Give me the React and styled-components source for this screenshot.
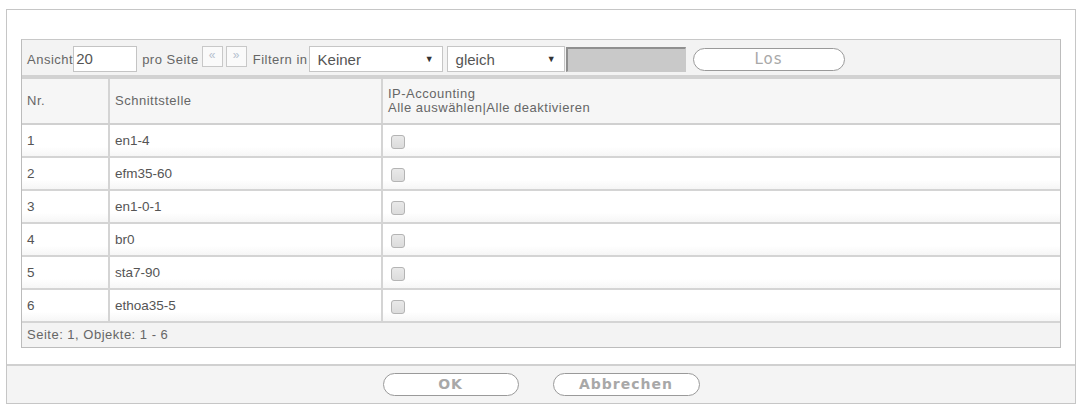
import styled, { createGlobalStyle } from "styled-components";

const GlobalStyle = createGlobalStyle`
  html, body {
    margin: 0;
    padding: 0;
    background: #ffffff;
    font-family: "Liberation Sans", Arial, sans-serif;
    color: #555555;
  }
`;

const Page = styled.div`
  padding: 9px 2px 0 6px;
`;

const Frame = styled.div`
  border: 1px solid #c6c6c6;
  height: 395px;
  box-sizing: border-box;
  display: flex;
  flex-direction: column;
`;

const Content = styled.div`
  flex: 1;
  padding: 29px 14px 0 14px;
`;

const Grid = styled.div`
  border: 1px solid #bcbcbc;
  border-top-color: #c8c8c8;
`;

const Toolbar = styled.div`
  display: flex;
  align-items: center;
  box-sizing: border-box;
  height: 39px;
  padding: 3px 5px 0 5px;
  background: #f3f3f3;
  border-bottom: 4px solid #d2d2d2;
  font-size: 13px;
  color: #666666;
`;

const Label = styled.span`
  margin-right: ${(p) => p.$mr || 0}px;
  margin-left: ${(p) => p.$ml || 0}px;
  letter-spacing: 0.5px;
`;

const TextBox = styled.div`
  box-sizing: border-box;
  width: ${(p) => p.$w}px;
  height: 26px;
  border: 1px solid #c4c4c4;
  background: #ffffff;
  font-size: 15px;
  color: #555555;
  padding: 3px 0 0 2px;
`;

const PageButton = styled.div`
  box-sizing: border-box;
  width: 21px;
  height: 21px;
  margin: -5px 3px 0 0;
  border: 1px solid #c8c8c8;
  background: #fafafa;
  color: #b5c0ce;
  font-size: 12px;
  text-align: center;
  line-height: 16px;
`;

const Select = styled.div`
  box-sizing: border-box;
  display: flex;
  align-items: center;
  justify-content: space-between;
  width: ${(p) => p.$w}px;
  height: 26px;
  margin-right: ${(p) => p.$mr || 0}px;
  padding: 0 8px 0 8px;
  border: 1px solid #c6c6c6;
  background: #ffffff;
  font-size: 15px;
  color: #555555;
`;

const Arrow = styled.span`
  font-size: 9px;
  color: #333333;
`;

const GrayInput = styled.div`
  box-sizing: border-box;
  width: 120px;
  height: 25px;
  border: 1px solid #c9c9c9;
  border-top: 2px solid #8f8f8f;
  border-left: 2px solid #8f8f8f;
  background: #c9c9c9;
  margin-right: 7px;
`;

const PillButton = styled.div`
  box-sizing: border-box;
  width: ${(p) => p.$w}px;
  height: 23px;
  border: 1.5px solid #9a9a9a;
  border-radius: 12px;
  background: #ffffff;
  color: #a8a8a8;
  font-family: "DejaVu Sans", sans-serif;
  font-size: ${(p) => (p.$bold ? 14 : 15)}px;
  font-weight: ${(p) => (p.$bold ? 700 : 400)};
  letter-spacing: 1px;
  text-align: center;
  line-height: 20px;
`;

const Table = styled.table`
  width: 100%;
  border-collapse: collapse;
  table-layout: fixed;
`;

const HeadCell = styled.th`
  height: 44px;
  padding: 0 0 0 5px;
  background: #f6f6f6;
  border-bottom: 2px solid #d0d0d0;
  border-left: ${(p) => (p.$first ? "none" : "2px solid #d4d4d4")};
  font-size: 13px;
  font-weight: 400;
  letter-spacing: 0.5px;
  color: #666666;
  text-align: left;
  vertical-align: middle;
  line-height: 14px;
`;

const Cell = styled.td`
  height: 31px;
  padding: 0 0 0 5px;
  background: linear-gradient(#ffffff 70%, #f6f6f6);
  border-bottom: 2px solid #d4d4d4;
  border-left: ${(p) => (p.$first ? "none" : "2px solid #d4d4d4")};
  font-size: 13.5px;
  color: #555555;
  vertical-align: middle;
`;

const Check = styled.input.attrs({ type: "checkbox" })`
  appearance: none;
  display: block;
  width: 14px;
  height: 14px;
  margin: 2px 0 0 3px;
  border: 1px solid #b4b4b4;
  border-radius: 3px;
  background: linear-gradient(#e9e9e9, #dcdcdc);
`;

const StatusRow = styled.div`
  height: 24px;
  padding-left: 5px;
  background: #f3f3f3;
  font-size: 13px;
  line-height: 24px;
  color: #666666;
  letter-spacing: 0.5px;
`;

const Footer = styled.div`
  height: 37px;
  border-top: 2px solid #d0d0d0;
  background: #f4f4f4;
  display: flex;
  justify-content: center;
  align-items: center;
  gap: 34px;
`;

const rows = [
  [1, "en1-4"],
  [2, "efm35-60"],
  [3, "en1-0-1"],
  [4, "br0"],
  [5, "sta7-90"],
  [6, "ethoa35-5"],
];

export default function App() {
  return (
    <Page>
      <GlobalStyle />
      <Frame>
        <Content>
          <Grid>
            <Toolbar>
              <Label>Ansicht</Label>
              <TextBox $w={64}>20</TextBox>
              <Label $ml={5} $mr={3}>pro Seite</Label>
              <PageButton>«</PageButton>
              <PageButton>»</PageButton>
              <Label $ml={3} $mr={1}>Filtern in</Label>
              <Select $w={134} $mr={4}>
                Keiner <Arrow>▼</Arrow>
              </Select>
              <Select $w={118} $mr={1}>
                gleich <Arrow>▼</Arrow>
              </Select>
              <GrayInput />
              <PillButton $w={152}>Los</PillButton>
            </Toolbar>
            <Table>
              <colgroup>
                <col style={{ width: 87 }} />
                <col style={{ width: 273 }} />
                <col />
              </colgroup>
              <thead>
                <tr>
                  <HeadCell $first>Nr.</HeadCell>
                  <HeadCell>Schnittstelle</HeadCell>
                  <HeadCell>
                    IP-Accounting
                    <br />
                    Alle auswählen|Alle deaktivieren
                  </HeadCell>
                </tr>
              </thead>
              <tbody>
                {rows.map(([nr, name]) => (
                  <tr key={nr}>
                    <Cell $first>{nr}</Cell>
                    <Cell>{name}</Cell>
                    <Cell>
                      <Check />
                    </Cell>
                  </tr>
                ))}
              </tbody>
            </Table>
            <StatusRow>Seite: 1, Objekte: 1 - 6</StatusRow>
          </Grid>
        </Content>
        <Footer>
          <PillButton $w={136} $bold>OK</PillButton>
          <PillButton $w={147} $bold>Abbrechen</PillButton>
        </Footer>
      </Frame>
    </Page>
  );
}
